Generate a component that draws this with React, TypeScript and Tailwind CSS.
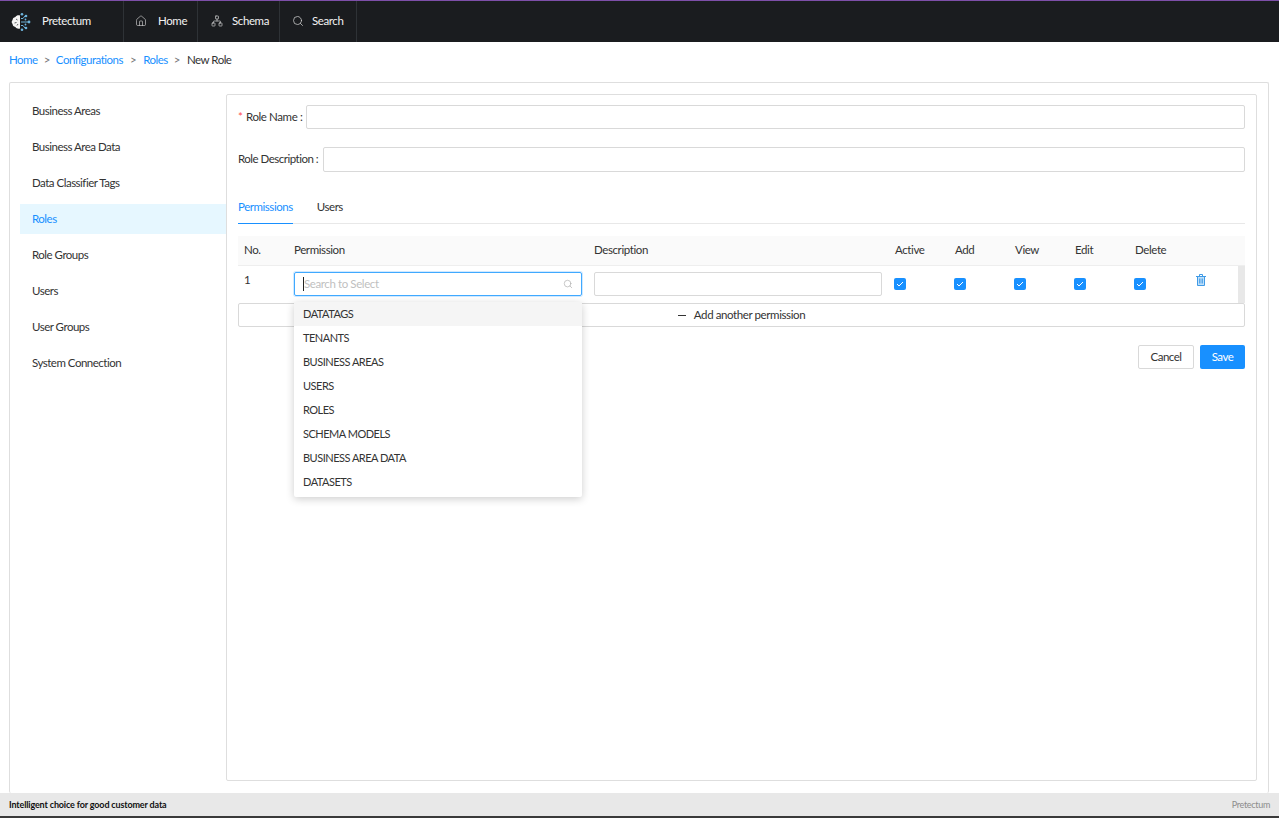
import React from "react";
import { Home, Network, Search } from "lucide-react";

const sideItems = ["Business Areas", "Business Area Data", "Data Classifier Tags", "Roles", "Role Groups", "Users", "User Groups", "System Connection"];
const options = ["DATATAGS", "TENANTS", "BUSINESS AREAS", "USERS", "ROLES", "SCHEMA MODELS", "BUSINESS AREA DATA", "DATASETS"];

function Logo() {
  return (
    <svg width="20" height="20" viewBox="0 0 20 20" className="shrink-0">
      <path d="M9 3.500C7 3 5.200 3.600 4.400 5 2.600 5.300 1.600 6.600 1.600 8 .4 9.200.4 11 1.600 12c0 1.500 1 2.700 2.800 3 .8 1.400 2.600 2 4.600 1.500z" fill="#f4f4f4" />
      <path d="M5 7l1.500 1M3.500 11l2-.5M6 13.500l1-1.500" stroke="#1a1c1f" strokeWidth="0.700" fill="none" />
      <g stroke="#6db3dc" strokeWidth="1" fill="none">
        <path d="M10 6.500h2l2-2.500M10 10h7M10 13.500h2l2 2.500" />
      </g>
      <g fill="#6db3dc">
        <circle cx="11" cy="2.200" r="1.300" />
        <circle cx="15" cy="4" r="1.300" />
        <circle cx="18" cy="10" r="1.400" />
        <circle cx="15" cy="16" r="1.300" />
        <circle cx="11" cy="17.800" r="1.300" />
        <circle cx="14.500" cy="7.500" r="0.900" />
        <circle cx="14.500" cy="12.500" r="0.900" />
      </g>
    </svg>
  );
}

function Check() {
  return (
    <span className="w-3 h-3 rounded-[2px] bg-[#1890ff] flex items-center justify-center">
      <svg width="8" height="6" viewBox="0 0 8 6" fill="none">
        <path d="M1 3l2 2 4-4" stroke="#fff" strokeWidth="1" />
      </svg>
    </span>
  );
}

function TrashIcon() {
  return (
    <svg width="10" height="12" viewBox="0 0 10 12" fill="none">
      <path d="M1.500 2.500h7v9h-7z" fill="#bfe0fa" stroke="#3f9ae6" strokeWidth="1" />
      <path d="M0 2.500h10M3.500 2.500V.5h3v2" stroke="#3f9ae6" strokeWidth="1" />
      <path d="M3.800 4.500v5M6.200 4.500v5" stroke="#3f9ae6" strokeWidth="1.200" />
    </svg>
  );
}

function NavItem({ icon, label, w }: { icon: React.ReactNode; label: string; w: string }) {
  return (
    <div className={`h-full flex items-center border-r border-[#2e3236] pb-[2px] ${w}`}>
      {icon}
      <span className="text-[#f2f2f2]">{label}</span>
    </div>
  );
}

export default function App() {
  return (
    <div className="w-[1279px] h-[818px] overflow-hidden bg-white flex flex-col text-[11.5px] tracking-[-0.4px] leading-[18px] text-[#333333] font-['Lato','Open_Sans',sans-serif]">
      <header className="h-[42px] shrink-0 bg-[#1a1c1f] border-t border-[#7d4fa8] flex items-center">
        <div className="w-[124px] h-full flex items-center pl-[11px] gap-[11px] border-r border-[#2e3236]">
          <Logo />
          <span className="text-[#f2f2f2] pb-[2px]">Pretectum</span>
        </div>
        <NavItem w="w-[74px] pl-[11px] gap-[11px]" label="Home" icon={<Home size={12} strokeWidth={1.3} className="text-[#cfcfcf]" />} />
        <NavItem w="w-[82px] pl-[13px] gap-[9px]" label="Schema" icon={<Network size={12} strokeWidth={1.4} className="text-[#cfcfcf]" />} />
        <NavItem w="w-[77px] pl-3 gap-2" label="Search" icon={<Search size={12} strokeWidth={1.5} className="text-[#cfcfcf]" />} />
      </header>

      <nav className="h-[40px] shrink-0 pl-[9px] pb-[2px] flex items-center gap-[6px] tracking-[-0.5px] -mt-px">
        <span className="text-[#1890ff]">Home</span>
        <span className="text-[#777]">&gt;</span>
        <span className="text-[#1890ff]">Configurations</span>
        <span className="text-[#777] ml-px">&gt;</span>
        <span className="text-[#1890ff] ml-px">Roles</span>
        <span className="text-[#777]">&gt;</span>
        <span className="text-[#333] ml-px">New Role</span>
      </nav>

      <main className="flex-1 min-h-0 mt-px ml-[9px] mr-[10px] border border-[#dedede] rounded-[2px] border-b-0 flex pl-[10px] pr-[11px] pt-[11px] pb-[12px]">
        <aside className="w-[206px] shrink-0 flex flex-col gap-[6px] pt-[2px] tracking-[-0.5px]">
          {sideItems.map((s) => (
            <div key={s} className={`h-[30px] shrink-0 flex items-center pl-3 ${s === "Roles" ? "bg-[#e6f7ff] text-[#1890ff]" : ""}`}>{s}</div>
          ))}
        </aside>
        <section className="flex-1 min-w-0 border border-[#dedede] rounded-[2px] pl-[11px] pr-[11px] pt-[10px]">
          <div className="flex items-center h-6">
            <span className="w-[8px] shrink-0 text-[#ff4d4f]">*</span>
            <span className="w-[60px] shrink-0">Role Name :</span>
            <div className="flex-1 h-6 border border-[#d9d9d9] rounded-[2px]" />
          </div>
          <div className="flex items-center h-[25px] mt-[18px]">
            <span className="w-[85px] shrink-0 pb-[2px] tracking-[-0.5px]">Role Description :</span>
            <div className="flex-1 h-[25px] border border-[#d9d9d9] rounded-[2px]" />
          </div>

          <div className="flex h-[52px] border-b border-[#e8e8e8] gap-6 items-end tracking-[-0.45px]">
            <div className="h-[26px] text-[#1890ff] border-b border-[#1890ff] -mb-[1px]">Permissions</div>
            <div className="h-[25px]">Users</div>
          </div>

          <div className="mt-3 h-[30px] pb-[2px] bg-[#fafafa] border-b border-[#eeeeee] flex items-center">
            <span className="w-[56px] pl-[6px] shrink-0">No.</span>
            <span className="w-[300px] shrink-0">Permission</span>
            <span className="w-[301px] shrink-0">Description</span>
            <span className="w-[60px] shrink-0">Active</span>
            <span className="w-[60px] shrink-0">Add</span>
            <span className="w-[60px] shrink-0">View</span>
            <span className="w-[60px] shrink-0">Edit</span>
            <span className="w-[60px] shrink-0">Delete</span>
          </div>

          <div className="h-[37px] flex items-start relative">
            <span className="w-[56px] pl-[6px] pt-[5px] shrink-0">1</span>
            <div className="w-[288px] shrink-0 mt-[6px] relative">
              <div className="h-6 border border-[#40a9ff] rounded-[2px] shadow-[0_0_0_1px_rgba(24,144,255,0.2)] flex items-center pl-2 pr-2 relative">
                <span className="w-px h-[14px] bg-[#222]" />
                <span className="text-[#bfbfbf] flex-1">Search to Select</span>
                <Search size={10} strokeWidth={1.5} className="text-[#a8a8a8]" />
              </div>
              <div className="absolute z-10 left-0 top-[30px] w-[288px] h-[195px] bg-white rounded-[2px] shadow-[0_2px_8px_rgba(0,0,0,0.2)] flex flex-col text-[11px] tracking-[-0.5px]">
                {options.map((o, i) => (
                  <div key={o} className={`h-6 shrink-0 flex items-center pl-[9px] ${i === 0 ? "bg-[#f5f5f5]" : ""}`}>{o}</div>
                ))}
              </div>
            </div>
            <div className="ml-3 w-[288px] h-6 shrink-0 mt-[6px] border border-[#d9d9d9] rounded-[2px]" />
            <div className="w-[12px] shrink-0" />
            {[0, 1, 2, 3, 4].map((i) => (
              <div key={i} className="w-[60px] shrink-0 pt-3">
                <Check />
              </div>
            ))}
            <div className="pt-[8px] ml-[2px]">
              <TrashIcon />
            </div>
            <div className="absolute right-0 top-0 bottom-0 w-[7px] bg-[#e8e8e8]" />
          </div>

          <div className="h-[24px] border border-[#d9d9d9] rounded-[2px] flex items-center justify-center gap-2 relative">
            <span className="w-2 h-px bg-[#333]" />
            <span>Add another permission</span>
          </div>

          <div className="flex justify-end gap-[6px] mt-[18px] tracking-[-0.5px]">
            <div className="h-6 w-[56px] border border-[#d9d9d9] rounded-[2px] flex items-center justify-center">Cancel</div>
            <div className="h-6 w-[45px] bg-[#1890ff] text-white rounded-[2px] flex items-center justify-center">Save</div>
          </div>
        </section>
      </main>

      <footer className="h-[23px] shrink-0 bg-[#e8e8e8] flex items-center justify-between pl-[9px] pr-[9px] pt-px">
        <span className="text-[9px] tracking-[-0.15px] font-bold text-[#111]">Intelligent choice for good customer data</span>
        <span className="text-[9px] tracking-[-0.3px] text-[#8c8c8c]">Pretectum</span>
      </footer>
      <div className="h-[2px] shrink-0 bg-[#3a3a3a]" />
    </div>
  );
}
